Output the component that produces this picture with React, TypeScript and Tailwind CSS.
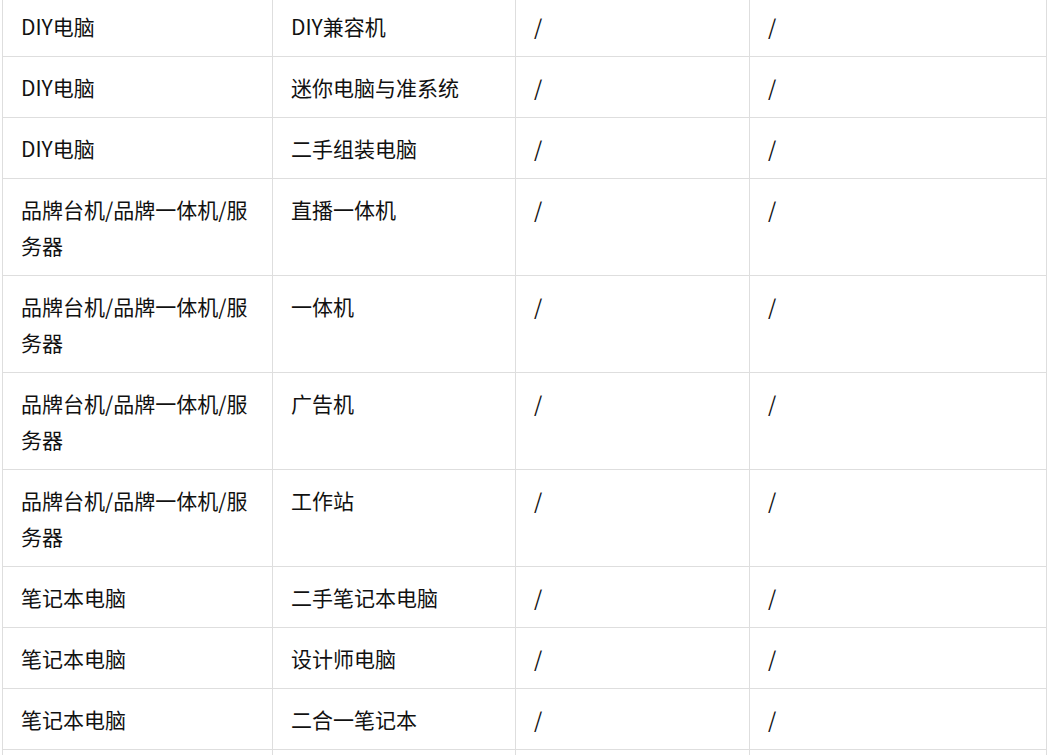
import React from "react";

const rows: [string, string][] = [
  ["DIY电脑", "DIY兼容机"],
  ["DIY电脑", "迷你电脑与准系统"],
  ["DIY电脑", "二手组装电脑"],
  ["品牌台机/品牌一体机/服务器", "直播一体机"],
  ["品牌台机/品牌一体机/服务器", "一体机"],
  ["品牌台机/品牌一体机/服务器", "广告机"],
  ["品牌台机/品牌一体机/服务器", "工作站"],
  ["笔记本电脑", "二手笔记本电脑"],
  ["笔记本电脑", "设计师电脑"],
  ["笔记本电脑", "二合一笔记本"],
  ["笔记本电脑", "游戏本"],
];

export default function App() {
  const cell =
    "border border-[#dedede] px-[18px] py-[12px] align-top text-left font-normal";
  return (
    <div
      className="w-[1050px] h-[755px] overflow-hidden bg-white text-[#111] text-[21px] leading-[36px]"
      style={{ fontFamily: '"Noto Sans CJK SC", "Noto Sans", sans-serif' }}
    >
      <table className="table-fixed border-collapse w-[1045px] ml-[2px] mt-[-5px]">
        <colgroup>
          <col className="w-[270px]" />
          <col className="w-[243px]" />
          <col className="w-[234px]" />
          <col className="w-[297px]" />
        </colgroup>
        <tbody>
          {rows.map((r, i) => (
            <tr key={i}>
              <td className={cell}>{r[0]}</td>
              <td className={cell}>{r[1]}</td>
              <td className={cell}>/</td>
              <td className={cell}>/</td>
            </tr>
          ))}
        </tbody>
      </table>
    </div>
  );
}
